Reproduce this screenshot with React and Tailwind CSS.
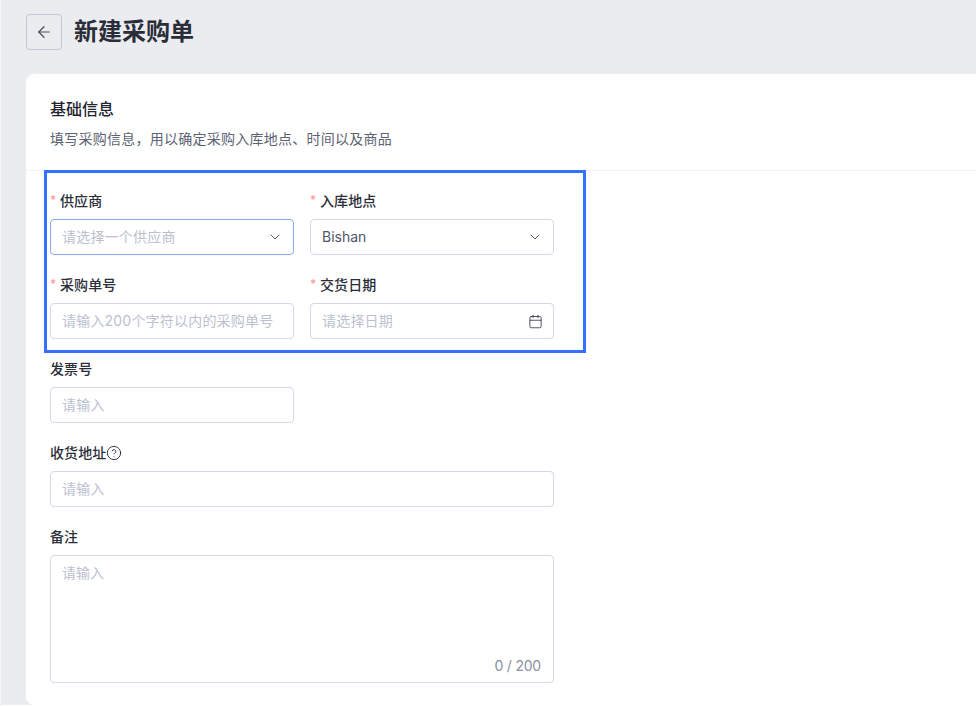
import { ArrowLeft, ChevronDown, Calendar, CircleHelp } from "lucide-react";

const fontStack = "font-['Inter','Noto_Sans_CJK_SC',sans-serif]";

function Label({ children, required }) {
  return (
    <div className="flex h-[22px] items-center text-sm font-medium leading-[22px] tracking-[0.1px] text-[#2a2e39]">
      {required && (
        <span className="mr-[5px] w-[5px] -translate-y-[1px] text-xs leading-none text-[#ff9c9c]">*</span>
      )}
      {children}
    </div>
  );
}

function Field({ label, required, placeholder, value, icon, focused, className }) {
  return (
    <div className={className}>
      <Label required={required}>{label}</Label>
      <div
        className={`mt-[7px] flex h-9 items-center justify-between rounded border bg-white pl-[11px] pr-[10px] text-sm ${
          focused ? "border-[#8aa8ee]" : "border-[#d5d8e6]"
        }`}
      >
        <span className={value ? "text-[#50566a]" : "tracking-[0.2px] text-[#bcc1cf]"}>{value || placeholder}</span>
        {icon}
      </div>
    </div>
  );
}

export default function App() {
  return (
    <div className={`relative h-[706px] w-[976px] overflow-hidden border-b border-l border-b-white border-l-[#f6f6f8] bg-[#ebecf0] ${fontStack}`}>
      {/* Header */}
      <div className="flex h-[74px] items-start pl-[25px] pt-[14px]">
        <button className="flex h-9 w-9 items-center justify-center rounded border border-[#c3c6d6]">
          <ArrowLeft size={18} strokeWidth={1.6} className="text-[#4a5062]" />
        </button>
        <h1 className="ml-3 text-2xl font-semibold leading-9 text-[#2a2e39]">新建采购单</h1>
      </div>

      {/* Card */}
      <div className="ml-[25px] h-[631px] rounded-l-lg bg-white">
        <div className="h-[97px] border-b border-[#f0f1f4] px-6 pt-[23px]">
          <h2 className="text-base font-medium leading-6 text-[#1f2430]">基础信息</h2>
          <p className="mt-[7px] text-sm leading-[22px] tracking-[0.25px] text-[#5c6273]">填写采购信息，用以确定采购入库地点、时间以及商品</p>
        </div>

        <div className="ml-6 w-[504px] pt-[19px]">
          <div className="grid grid-cols-[244px_244px] gap-x-4 gap-y-[19px]">
            <Field
              label="供应商"
              required
              focused
              placeholder="请选择一个供应商"
              icon={<ChevronDown size={16} strokeWidth={1.3} className="text-[#3a3f4d]" />}
            />
            <Field
              label="入库地点"
              required
              value="Bishan"
              icon={<ChevronDown size={16} strokeWidth={1.3} className="text-[#3a3f4d]" />}
            />
            <Field label="采购单号" required placeholder="请输入200个字符以内的采购单号" />
            <Field
              label="交货日期"
              required
              placeholder="请选择日期"
              icon={<Calendar size={15} strokeWidth={1.3} className="text-[#2f3340]" />}
            />
            <Field label="发票号" placeholder="请输入" />
            <div />
            <Field
              className="col-span-2"
              label={
                <span className="flex items-center">
                  收货地址
                  <CircleHelp size={16} strokeWidth={1.4} className="text-[#2a2e39]" />
                </span>
              }
              placeholder="请输入"
            />
            <div className="col-span-2">
              <Label>备注</Label>
              <div className="relative mt-[7px] h-32 rounded border border-[#d5d8e6] py-[6px] pl-[11px] pr-3 text-sm leading-[22px] text-[#bcc1cf]">
                请输入
                <span className="absolute bottom-[5px] right-3 tracking-[-0.2px] text-[#8a90a3]">0 / 200</span>
              </div>
            </div>
          </div>
        </div>
      </div>

      {/* Highlight box */}
      <div className="absolute left-[43px] top-[170px] h-[183px] w-[542px] border-[3px] border-[#3370ff]" />
    </div>
  );
}
